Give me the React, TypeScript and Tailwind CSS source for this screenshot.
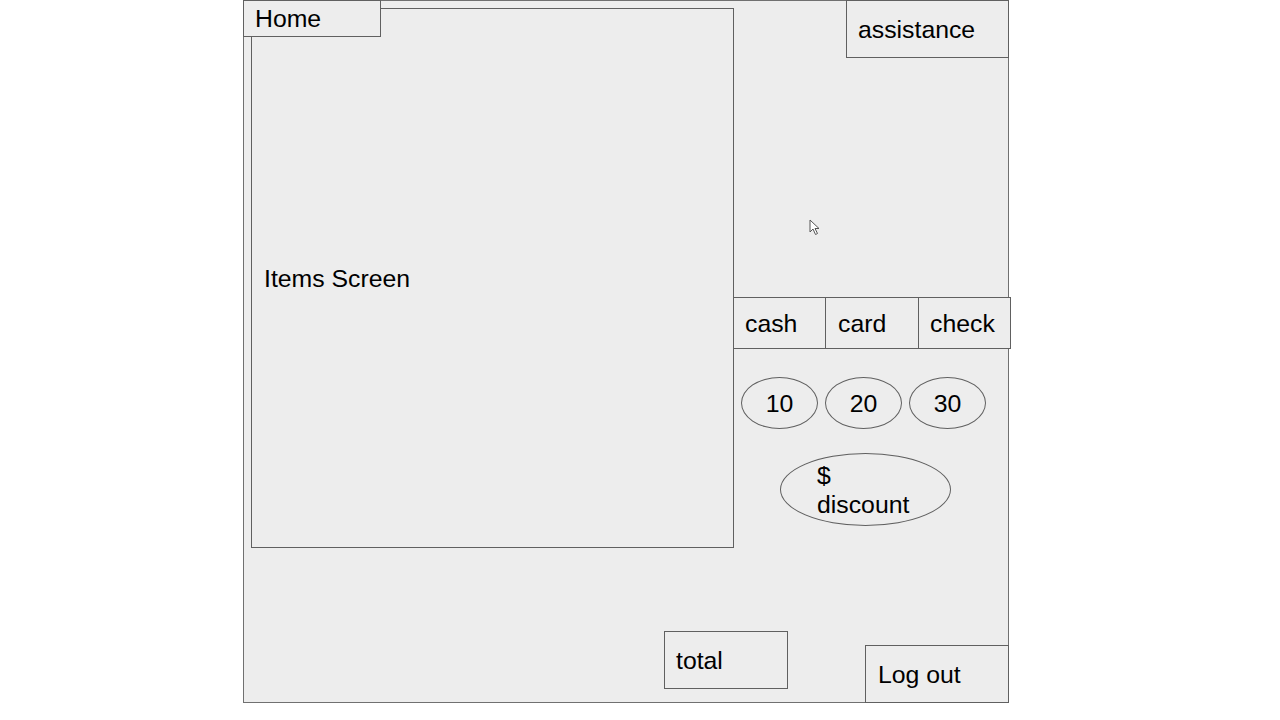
import React from "react";

const font = { fontFamily: '"Liberation Sans", Arial, sans-serif' };

function Box({ className, children }: { className: string; children?: React.ReactNode }) {
  return (
    <div className={`flex shrink-0 items-center border border-[#606060] bg-[#ededed] pt-[2px] text-[24.8px] leading-none text-black ${className}`}>
      {children}
    </div>
  );
}

function Coin({ label }: { label: string }) {
  return (
    <div className="flex h-[52px] w-[77px] items-center justify-center rounded-[50%] border border-[#606060] pt-[2px] text-[24.8px] leading-none text-black">
      {label}
    </div>
  );
}

function Cursor() {
  return (
    <svg className="absolute left-[565px] top-[218px]" width="12" height="18" viewBox="0 0 12 18">
      <path d="M1 1 L1 13 L4 10 L6.5 15.5 L8.5 14.5 L6 9.5 L10 9.5 Z" fill="white" stroke="#555" strokeWidth="1" strokeLinejoin="round" />
    </svg>
  );
}

export default function App() {
  return (
    <div className="min-h-[720px] w-[1280px] bg-white" style={font}>
      <div className="relative ml-[243px] flex h-[703px] w-[766px] flex-col border border-[#707070] bg-[#ededed]">
        {/* top section */}
        <div className="flex h-[547px]">
          <div className="relative shrink-0 pl-[7px] pt-[7px]">
            <Box className="h-[540px] w-[483px] pl-[12px]">Items Screen</Box>
            <Box className="absolute left-[-1px] top-[-1px] h-[37px] w-[138px] pl-[11px]">Home</Box>
          </div>
          <div className="-ml-[1px] flex min-w-0 flex-1 flex-col">
            <Box className="-mr-[1px] -mt-[1px] h-[58px] w-[163px] self-end pl-[11px]">assistance</Box>

            <div className="mt-[239px] flex h-[52px] w-[278px] shrink-0 border border-[#606060] bg-[#ededed] text-[24.8px] leading-none text-black">
              <div className="flex w-[92px] items-center border-r border-[#606060] pl-[11px] pt-[2px]">cash</div>
              <div className="flex w-[93px] items-center border-r border-[#606060] pl-[12px] pt-[2px]">card</div>
              <div className="flex flex-1 items-center pl-[11px] pt-[2px]">check</div>
            </div>

            <div className="ml-[8px] mt-[28px] flex gap-[7px]">
              <Coin label="10" />
              <Coin label="20" />
              <Coin label="30" />
            </div>

            <div className="ml-[47px] mt-[24px] flex h-[73px] w-[171px] items-center rounded-[50%] border border-[#606060] pl-[36px] text-[24.8px] leading-[29px] text-black">
              <div>
                $<br />discount
              </div>
            </div>
          </div>
        </div>

        {/* bottom section */}
        <div className="flex flex-1 items-end justify-end gap-[77px]">
          <Box className="mb-[13px] h-[58px] w-[124px] pl-[11px]">total</Box>
          <Box className="-mb-[1px] -mr-[1px] h-[58px] w-[144px] pl-[12px] pt-[3px]">Log out</Box>
        </div>

        <Cursor />
      </div>
    </div>
  );
}
